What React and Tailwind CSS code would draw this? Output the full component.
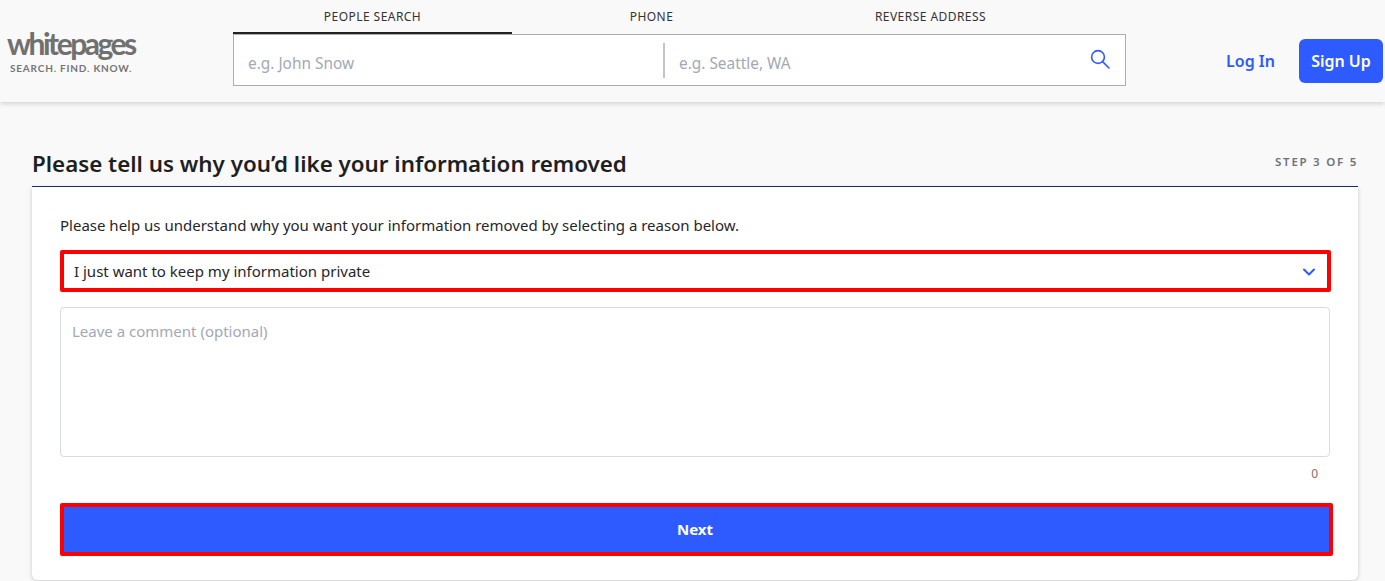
import { ChevronDown } from "lucide-react";

const font = { fontFamily: '"Noto Sans", sans-serif' };

function Logo() {
  return (
    <div className="w-[233px] shrink-0 pl-[7px] pt-[25px]">
      <div className="font-['Lato',sans-serif] text-[30px] leading-[36px] font-bold tracking-[-2.5px] text-[#707070]">whitepages</div>
      <div className="mt-[1px] pl-[3px] font-['Lato',sans-serif] text-[10px] leading-[12px] font-bold tracking-[0.8px] text-[#757575]">SEARCH. FIND. KNOW.</div>
    </div>
  );
}

function SearchBar() {
  return (
    <div className="w-[893px] shrink-0">
      <div className="flex h-[34px] text-[12px] tracking-[0.45px] text-[#333]">
        <div className="w-[279px] h-[34px] pt-[8px] text-center leading-[18px] border-b-[2px] border-[#222]">PEOPLE SEARCH</div>
        <div className="w-[279px] pt-[8px] text-center leading-[18px]">PHONE</div>
        <div className="w-[279px] pt-[8px] text-center leading-[18px]">REVERSE ADDRESS</div>
      </div>
      <div className="flex items-center h-[52px] bg-white border border-[#a9adb8] text-[15.4px] text-[#a3a8b5]">
        <div className="w-[429px] pl-[14px] pt-[7px]">e.g. John Snow</div>
        <div className="w-[2px] h-[35px] bg-[#c4c4c4]" />
        <div className="flex-1 pl-[14px] pt-[7px]">e.g. Seattle, WA</div>
        <svg className="w-[20px] h-[20px] mr-[15px] mb-[3px] text-[#2e5bff]" viewBox="0 0 20 20" fill="none" stroke="currentColor" strokeWidth="1.6">
          <circle cx="8" cy="8" r="6.4" />
          <path d="M12.6 12.6 L19 19" strokeLinecap="round" />
        </svg>
      </div>
    </div>
  );
}

export default function App() {
  return (
    <div className="h-[581px] overflow-hidden bg-[#f9f9f9]" style={font}>
      {/* HEADER */}
      <header className="flex h-[102px] bg-[#f9f9f9] shadow-[0_2px_5px_rgba(0,0,0,0.15)]">
        <Logo />
        <SearchBar />
        <div className="flex flex-1 items-start justify-end pt-[39px] pr-[2px]">
          <span className="mr-[24px] leading-[44px] text-[16px] font-semibold text-[#2e5bff]">Log In</span>
          <button className="w-[84px] h-[44px] rounded-[6px] bg-[#2e5bff] text-[16px] font-semibold text-white">Sign Up</button>
        </div>
      </header>

      {/* MAIN */}
      <main className="pl-[32px] pr-[27px] pt-[47px]">
        <div className="flex items-start justify-between h-[38px] border-b border-[#1a2f7e]">
          <h1 className="text-[22.35px] leading-[30px] font-semibold text-[#1f1f1f]">Please tell us why you’d like your information removed</h1>
          <span className="mt-[5px] text-[11.5px] leading-[16px] font-semibold tracking-[1.75px] text-[#6b7280]">STEP 3 OF 5</span>
        </div>
        <div className="h-[393px] bg-white rounded-b-[6px] pl-[28px] pr-[25px] pt-[28px] shadow-[0_1px_4px_rgba(0,0,0,0.2)]">
          <p className="text-[15px] leading-[20px] text-[#26262b]">Please help us understand why you want your information removed by selecting a reason below.</p>
          <div className="flex items-center justify-between h-[42px] mt-[15px] w-[1271px] pl-[10px] pr-[8px] border-[4px] border-[#ff0000] rounded-[2px] text-[15px] text-[#26262b]">
            <span className="pt-[1px]">I just want to keep my information private</span>
            <ChevronDown className="w-[20px] h-[20px] mt-[2px] text-[#2e5bff]" strokeWidth={2.5} />
          </div>
          <div className="h-[150px] mt-[15px] w-[1270px] px-[11px] pt-[13px] border border-[#d9dcdc] rounded-[4px] text-[15px] leading-[20px] text-[#a3a8b5]">Leave a comment (optional)</div>
          <div className="w-[1270px] mt-[8px] pr-[12px] text-right text-[12px] leading-[18px] text-[#8a6d63]">0</div>
          <button className="block w-[1273px] h-[53px] mt-[20px] pr-[3px] bg-[#2e5bff] border-[4px] border-[#ff0000] rounded-[2px] text-[15px] font-bold text-white">Next</button>
        </div>
      </main>
    </div>
  );
}
